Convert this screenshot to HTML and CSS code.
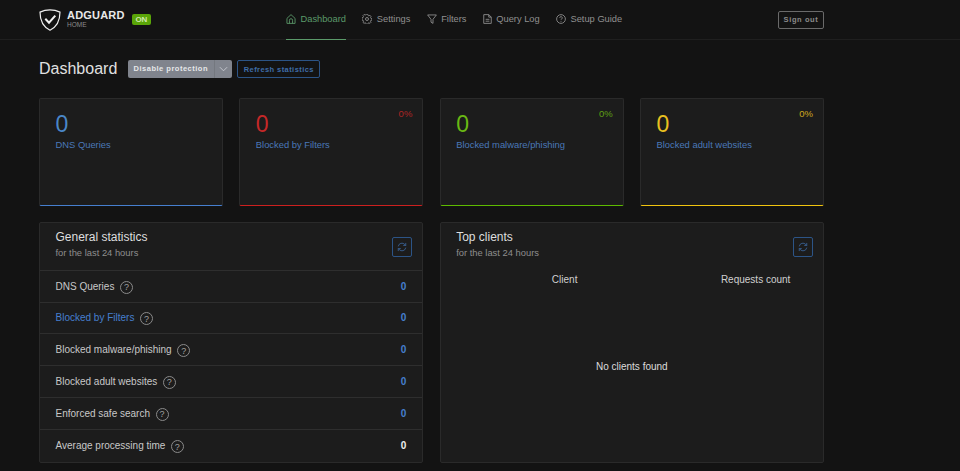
FILE: index.html
```html
<!DOCTYPE html>
<html lang="en">
<head>
  <meta charset="UTF-8" />
  <meta name="viewport" content="width=device-width, initial-scale=1.0"/>
  <title>AdGuard Home</title>
  <link rel="stylesheet" href="styles.css">
</head>
<body>
  <header class="topbar">
    <div class="brand">
      <svg class="brand-logo" viewBox="0 0 22 22" width="22" height="22" fill="none" stroke="#f0f0f0" stroke-width="1.2">
        <path d="M11 .9C7.500 .9 4 1.700 1 3.100 1 11 3.200 17.500 11 21.200 18.800 17.500 21 11 21 3.100 18 1.700 14.500 .9 11 .9z"/>
        <path d="M6.300 9.800l3.700 3.900 6.300-7.100" stroke-width="2"/>
      </svg>
      <div class="brand-text">
        <span class="brand-name">ADGUARD</span>
        <span class="brand-sub">HOME</span>
      </div>
      <span class="badge-on">ON</span>
    </div>
    <nav class="nav">
      <a class="nav-link active">
        <svg viewBox="0 0 16 16" width="10" height="10" fill="none" stroke="currentColor" stroke-width="1.4"><path d="M1.500 7L8 1l6.500 6v8h-13z"/><path d="M5.500 15V10a2.500 2.500 0 0 1 5 0v5"/></svg>
        Dashboard
      </a>
      <a class="nav-link">
        <svg viewBox="0 0 16 16" width="10" height="10" fill="none" stroke="currentColor" stroke-width="1.4"><path d="M6.700 1h2.600l.5 2 1.400.6 1.800-1 1.800 1.800-1 1.800.6 1.400 2 .5v2.600l-2 .5-.6 1.400 1 1.800-1.800 1.800-1.800-1-1.400.6-.5 2H6.700l-.5-2-1.400-.6-1.800 1-1.800-1.800 1-1.800-.6-1.400-2-.5V6.700l2-.5.6-1.400-1-1.800 1.800-1.800 1.800 1 1.400-.6z" transform="translate(.4 -.4) scale(.95)"/><circle cx="8" cy="8" r="2.400"/></svg>
        Settings
      </a>
      <a class="nav-link">
        <svg viewBox="0 0 16 16" width="10" height="10" fill="none" stroke="currentColor" stroke-width="1.4"><path d="M1 1.500h14L9.600 8.500V15L6.400 13V8.500z"/></svg>
        Filters
      </a>
      <a class="nav-link">
        <svg viewBox="0 0 14 16" width="9" height="10" fill="none" stroke="currentColor" stroke-width="1.4"><path d="M1 1h8l4 4v10H1z"/><path d="M9 1v4h4M4 8.500h6M4 11.500h6"/></svg>
        Query Log
      </a>
      <a class="nav-link">
        <svg viewBox="0 0 16 16" width="10" height="10" fill="none" stroke="currentColor" stroke-width="1.4"><circle cx="8" cy="8" r="7"/><path d="M6 6.200a2 2 0 1 1 3 1.700c-.7.400-1 .8-1 1.600M8 11v1.400"/></svg>
        Setup Guide
      </a>
    </nav>
    <button class="btn-signout">Sign out</button>
  </header>

  <main class="page">
    <div class="page-head">
      <h1 class="page-title">Dashboard</h1>
      <div class="split-btn">
        <span class="split-main">Disable protection</span>
        <span class="split-caret">
          <svg viewBox="0 0 10 6" width="9" height="6" fill="none" stroke="#c8ccd2" stroke-width="1"><path d="M1 1l4 4 4-4"/></svg>
        </span>
      </div>
      <button class="btn-refresh">Refresh statistics</button>
    </div>

    <section class="stat-grid">
      <div class="stat-card blue">
        <div class="stat-num">0</div>
        <div class="stat-label">DNS Queries</div>
      </div>
      <div class="stat-card red">
        <span class="stat-pct">0%</span>
        <div class="stat-num">0</div>
        <div class="stat-label">Blocked by Filters</div>
      </div>
      <div class="stat-card green">
        <span class="stat-pct">0%</span>
        <div class="stat-num">0</div>
        <div class="stat-label">Blocked malware/phishing</div>
      </div>
      <div class="stat-card yellow">
        <span class="stat-pct">0%</span>
        <div class="stat-num">0</div>
        <div class="stat-label">Blocked adult websites</div>
      </div>
    </section>

    <section class="panel-grid">
      <div class="panel">
        <div class="panel-head">
          <div class="panel-heading">
            <h2 class="panel-title">General statistics</h2>
            <div class="panel-sub">for the last 24 hours</div>
          </div>
          <button class="btn-icon">
            <svg viewBox="0 0 16 16" width="10" height="10" fill="none" stroke="#3f6da8" stroke-width="1.2"><path d="M2 7a6 6 0 0 1 10.500-3L14 5.500M14 1.500v4h-4M14 9a6 6 0 0 1-10.500 3L2 10.500M2 14.500v-4h4"/></svg>
          </button>
        </div>
        <div class="row"><span class="row-name">DNS Queries<i class="help">?</i></span><b class="row-val">0</b></div>
        <div class="row"><span class="row-name link">Blocked by Filters<i class="help">?</i></span><b class="row-val">0</b></div>
        <div class="row"><span class="row-name">Blocked malware/phishing<i class="help">?</i></span><b class="row-val">0</b></div>
        <div class="row"><span class="row-name">Blocked adult websites<i class="help">?</i></span><b class="row-val">0</b></div>
        <div class="row"><span class="row-name">Enforced safe search<i class="help">?</i></span><b class="row-val">0</b></div>
        <div class="row last"><span class="row-name">Average processing time<i class="help">?</i></span><b class="row-val white">0</b></div>
      </div>

      <div class="panel">
        <div class="panel-head clients-head">
          <div class="panel-heading">
            <h2 class="panel-title">Top clients</h2>
            <div class="panel-sub">for the last 24 hours</div>
          </div>
          <button class="btn-icon">
            <svg viewBox="0 0 16 16" width="10" height="10" fill="none" stroke="#3f6da8" stroke-width="1.2"><path d="M2 7a6 6 0 0 1 10.500-3L14 5.500M14 1.500v4h-4M14 9a6 6 0 0 1-10.500 3L2 10.500M2 14.500v-4h4"/></svg>
          </button>
        </div>
        <div class="table-head">
          <span class="col-client">Client</span>
          <span class="col-count">Requests count</span>
        </div>
        <div class="empty">No clients found</div>
      </div>
    </section>
  </main>
</body>
</html>
```

FILE: styles.css
```css
* {
  box-sizing: border-box;
}

html, body {
  height: 100%;
}

body {
  margin: 0;
  background-color: #131313;
  color: #dcdcdc;
  font-family: "Liberation Sans", Arial, sans-serif;
  font-size: 10px;
  overflow: hidden;
}

.topbar {
  display: flex;
  align-items: center;
  height: 40px;
  padding: 0 136px 0 39px;
  border-bottom: 1px solid #1f1f1f;
}

.brand {
  display: flex;
  align-items: center;
  width: 247px;
}

.brand-logo {
  margin-right: 6px;
}

.brand-text {
  display: flex;
  flex-direction: column;
  margin-right: 7.5px;
}

.brand-name {
  font-size: 11px;
  font-weight: 700;
  letter-spacing: 0.2px;
  line-height: 11px;
  color: #e8e8e8;
}

.brand-sub {
  font-size: 6.5px;
  line-height: 8px;
  color: #8c8c8c;
}

.badge-on {
  width: 18.5px;
  height: 11px;
  font-size: 8px;
  font-weight: 700;
  line-height: 11px;
  text-align: center;
  color: #cfe8b0;
  background-color: #5aa508;
  border-radius: 2px;
}

.nav {
  display: flex;
  flex: 1;
  height: 40px;
}

.nav-link {
  display: flex;
  align-items: center;
  gap: 4.5px;
  margin-right: 16.3px;
  font-size: 9.3px;
  color: #909090;
  border-bottom: 1px solid transparent;
}

.nav-link.active {
  color: #5b9a6a;
  border-bottom-color: #5b9a6a;
}

.btn-signout {
  width: 46px;
  height: 18px;
  padding: 0;
  font-family: inherit;
  font-size: 7.5px;
  font-weight: 700;
  letter-spacing: 0.6px;
  color: #8a8a8a;
  background: transparent;
  border: 1px solid #6a6a6a;
  border-radius: 2px;
}

.page {
  padding: 0 136px 0 39px;
}

.page-head {
  display: flex;
  align-items: center;
  height: 58px;
}

.page-title {
  margin: 0 10.5px 0 0;
  font-size: 16px;
  font-weight: 400;
  color: #e0e0e0;
}

.split-btn {
  display: flex;
  height: 18px;
  margin-right: 5.5px;
  background-color: #80848d;
  border-radius: 2px;
}

.split-main {
  width: 86px;
  font-size: 7.5px;
  font-weight: 700;
  letter-spacing: 0.5px;
  line-height: 18px;
  text-align: center;
  color: #e6e8ea;
}

.split-caret {
  display: flex;
  align-items: center;
  justify-content: center;
  width: 18px;
  border-left: 1px solid #74787f;
}

.btn-refresh {
  height: 18px;
  width: 83px;
  padding: 0;
  font-family: inherit;
  font-size: 7.5px;
  font-weight: 700;
  letter-spacing: 0.42px;
  color: #3f6da8;
  background: transparent;
  border: 1px solid #2c5486;
  border-radius: 2px;
}

.stat-grid {
  display: grid;
  grid-template-columns: repeat(4, minmax(0, 1fr));
  gap: 16.3px;
}

.stat-card {
  position: relative;
  height: 108px;
  padding: 12px 15.5px;
  background-color: #1c1c1c;
  border: 1px solid #2a2a2a;
  border-radius: 2px;
}

.stat-card.blue {
  border-bottom-color: #467fcf;
  color: #4a86c8;
}

.stat-card.red {
  border-bottom-color: #cd201f;
  color: #c62828;
}

.stat-card.green {
  border-bottom-color: #5eba00;
  color: #6ab814;
}

.stat-card.yellow {
  border-bottom-color: #f1c40f;
  color: #e8c020;
}

.stat-num {
  font-size: 23px;
  line-height: 26px;
}

.stat-label {
  margin-top: 2px;
  font-size: 9.4px;
  color: #4a78b8;
}

.stat-pct {
  position: absolute;
  top: 9px;
  right: 10px;
  font-size: 9.5px;
  opacity: 0.85;
}

.panel-grid {
  display: grid;
  grid-template-columns: repeat(2, minmax(0, 1fr));
  gap: 16.3px;
  margin-top: 16.3px;
}

.panel {
  display: flex;
  flex-direction: column;
  height: 240.5px;
  background-color: #1c1c1c;
  border: 1px solid #2a2a2a;
  border-radius: 2px;
}

.panel-head {
  display: flex;
  align-items: center;
  justify-content: space-between;
  height: 47.5px;
  flex: none;
  padding: 0 10.5px 0 15.5px;
  border-bottom: 1px solid #2e2e2e;
}

.clients-head {
  border-bottom: none;
}

.panel-heading {
  padding-bottom: 6px;
}

.panel-title {
  margin: 0;
  font-size: 12px;
  font-weight: 400;
  line-height: 16px;
  color: #dedede;
}

.panel-sub {
  margin-top: 2px;
  font-size: 9.4px;
  line-height: 12px;
  color: #8e8e8e;
}

.btn-icon {
  display: flex;
  align-items: center;
  justify-content: center;
  width: 20px;
  height: 20px;
  padding: 0;
  background: transparent;
  border: 1px solid #2c5486;
  border-radius: 2px;
}

.row {
  display: flex;
  align-items: center;
  justify-content: space-between;
  height: 31.75px;
  flex: none;
  padding: 0 16px 0 15.5px;
  border-bottom: 1px solid #2e2e2e;
}

.row.last {
  flex: 1;
  border-bottom: none;
}

.row-name {
  display: flex;
  align-items: center;
  font-size: 10px;
  color: #c8c8c8;
}

.row-name.link {
  color: #467fcf;
}

.help {
  display: flex;
  align-items: center;
  justify-content: center;
  width: 13px;
  height: 13px;
  margin: 2px 0 0 5.5px;
  font-size: 9px;
  font-style: normal;
  color: #a0a0a0;
  border: 1px solid #8a8a8a;
  border-radius: 50%;
}

.row-val {
  font-size: 10px;
  color: #467fcf;
}

.row-val.white {
  color: #eee;
}

.table-head {
  display: flex;
  margin-top: 3.5px;
  font-size: 10px;
  color: #d0d0d0;
}

.col-client {
  width: 248px;
  text-align: center;
}

.col-count {
  width: 134px;
  text-align: center;
}

.empty {
  margin-top: 75.5px;
  font-size: 10px;
  text-align: center;
  color: #dcdcdc;
}
```
